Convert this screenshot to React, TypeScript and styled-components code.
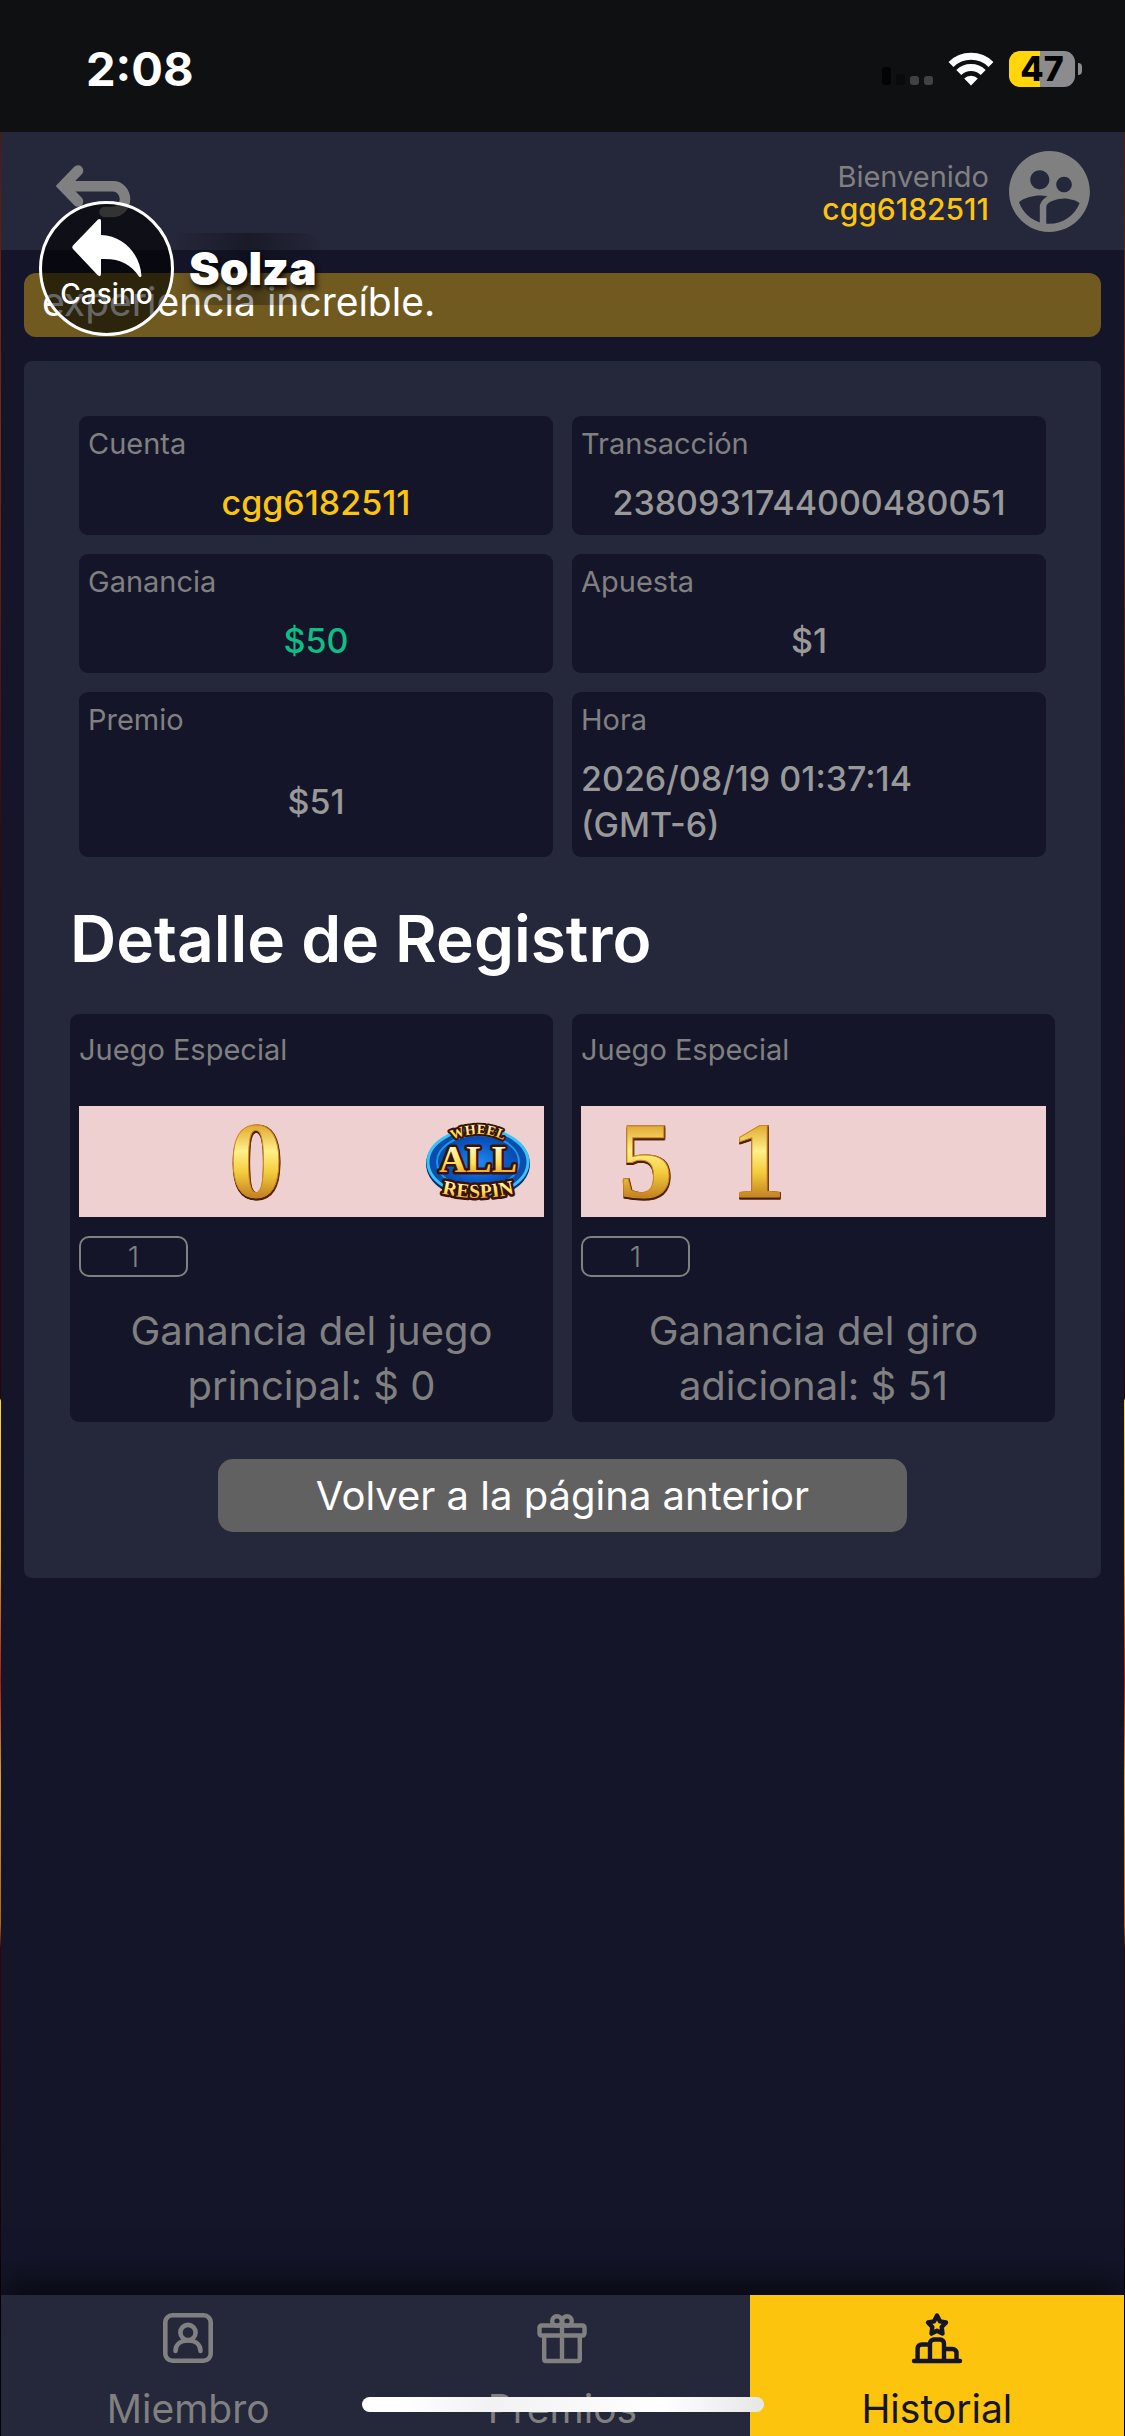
import React from "react";
import styled, { createGlobalStyle, css } from "styled-components";
import { MdSupervisedUserCircle } from "react-icons/md";

const color = {
  page: "#141529",
  panel: "#25273a",
  muted: "#808080",
  value: "#999999",
  accent: "#fdc40e",
  win: "#10bd86",
  ink: "#141529",
};

const GlobalStyle = createGlobalStyle`
  *, *::before, *::after { box-sizing: border-box; }
  body {
    margin: 0;
    font-family: Inter, "Liberation Sans", sans-serif;
    color: #fff;
    background: linear-gradient(
      180deg,
      #4a0f06 0%, #7a2a0c 18%, #3c0605 35%, #2a0404 57.4%,
      #ffd23c 57.5%, #f0a020 64%, #c05010 67%, #b01808 69%,
      #e0a030 73%, #c06010 79%, #330505 80%, #1c0202 92%, #000 96%
    );
  }
  h2, p, dl, dt, dd, figure { margin: 0; }
`;

const Screen = styled.div`
  position: relative;
  min-height: 100vh;
  display: flex;
  flex-direction: column;
`;

const StatusBar = styled.div`
  height: 132px;
  padding: 0 43px 0 86px;
  display: flex;
  align-items: center;
  justify-content: space-between;
  background: #0f1011;
`;

const Clock = styled.time`
  font-size: 47px;
  line-height: 56px;
  font-weight: 700;
  padding-top: 6px;
`;

const StatusIcons = styled.div`
  display: flex;
  align-items: center;
  gap: 15px;
  padding-top: 6px;
`;

const Battery = styled.div`
  display: flex;
  align-items: center;
  gap: 3px;
`;

const BatteryBody = styled.div`
  width: 66px;
  height: 36px;
  border-radius: 11px;
  background: linear-gradient(90deg, #ffd60a 47%, #8c8c8e 47%);
  color: #000;
  font-size: 34px;
  line-height: 36px;
  font-weight: 800;
  text-align: center;
`;

const BatteryCap = styled.div`
  width: 4px;
  height: 12px;
  border-radius: 0 6px 6px 0;
  background: #8c8c8e;
`;

const Page = styled.div`
  flex: 1;
  margin: 0 1px;
  display: flex;
  flex-direction: column;
  background: ${color.page};
`;

const Header = styled.header`
  height: 118px;
  padding: 0 26px 0 51px;
  display: flex;
  align-items: center;
  justify-content: space-between;
  background: ${color.panel};
`;

const IconLink = styled.a`
  display: block;
  color: ${color.muted};
  svg { display: block; }
`;

const Account = styled.div`
  display: flex;
  align-items: center;
  gap: 12px;
  color: ${color.muted};
`;

const Greeting = styled.p`
  padding-top: 4px;
  text-align: right;
  font-size: 29px;
  line-height: 32px;
  strong {
    display: block;
    font-size: 30px;
    font-weight: 500;
    color: ${color.accent};
  }
`;

const Main = styled.main`
  flex: 1;
  padding: 23px;
  display: flex;
  flex-direction: column;
  gap: 24px;
`;

const Marquee = styled.p`
  height: 64px;
  padding: 0 18px;
  border-radius: 12px;
  background: #705a20;
  font-size: 39px;
  line-height: 58px;
  white-space: nowrap;
  overflow: hidden;
`;

const Card = styled.section`
  padding: 55px 46px 46px;
  border-radius: 8px;
  background: ${color.panel};
`;

const InfoGrid = styled.dl`
  margin: 0 9px;
  display: grid;
  grid-template-columns: repeat(2, minmax(0, 1fr));
  gap: 19px;
`;

const InfoCell = styled.div`
  padding: 7px 9px 9px;
  display: flex;
  flex-direction: column;
  gap: 15px;
  border-radius: 9px;
  background: ${color.page};
`;

const labelText = css`
  font-size: 29px;
  line-height: 42px;
  color: ${color.muted};
`;

const InfoLabel = styled.dt`
  ${labelText}
`;

const InfoValue = styled.dd<{ $tone: string; $start?: boolean }>`
  flex: 1;
  display: flex;
  align-items: center;
  justify-content: ${(p) => (p.$start ? "flex-start" : "center")};
  font-size: 34px;
  line-height: 46px;
  font-weight: 500;
  white-space: pre-line;
  color: ${(p) => p.$tone};
`;

const Title = styled.h2`
  margin: 40px 0 33px;
  font-size: 64px;
  line-height: 84px;
  font-weight: 600;
`;

const RoundGrid = styled.div`
  display: grid;
  grid-template-columns: repeat(2, minmax(0, 1fr));
  gap: 19px;
`;

const Round = styled.article`
  padding: 15px 9px 9px;
  border-radius: 9px;
  background: ${color.page};
`;

const RoundLabel = styled.p`
  ${labelText}
`;

const Reels = styled.div`
  margin: 35px 0 19px;
  height: 111px;
  display: flex;
  justify-content: center;
  background: #eed0d1;
`;

const Reel = styled.div`
  width: 112px;
  svg { display: block; overflow: visible; }
`;

const Multiplier = styled.p`
  width: 109px;
  height: 41px;
  border: 2px solid ${color.muted};
  border-radius: 10px;
  text-align: center;
  font-size: 29px;
  line-height: 37px;
  font-weight: 300;
  color: ${color.muted};
`;

const Summary = styled.p`
  margin-top: 26px;
  padding: 0 36px;
  text-align: center;
  font-size: 40px;
  line-height: 55px;
  color: ${color.muted};
`;

const ReturnButton = styled.button`
  display: block;
  width: 70%;
  height: 73px;
  margin: 37px auto 0;
  padding: 0;
  border: 0;
  border-radius: 15px;
  background: #616161;
  color: #fff;
  font: 400 40px/73px Inter, "Liberation Sans", sans-serif;
`;

const TabBar = styled.nav`
  display: grid;
  grid-template-columns: repeat(3, 1fr);
  box-shadow: 0 -12px 36px rgba(0, 0, 0, 0.65);
`;

const Tab = styled.a<{ $active?: boolean }>`
  padding-top: 15px;
  display: flex;
  flex-direction: column;
  align-items: center;
  gap: 16px;
  font-size: 39px;
  line-height: 54px;
  text-decoration: none;
  color: ${(p) => (p.$active ? color.ink : color.muted)};
  background: ${(p) => (p.$active ? color.accent : color.panel)};
  svg { display: block; }
`;

const HomeIndicator = styled.div`
  position: absolute;
  left: 50%;
  bottom: 24px;
  width: 402px;
  height: 15px;
  margin-left: -201px;
  border-radius: 8px;
  background: linear-gradient(90deg, #fff 10%, #f2f2f2 32%, #fff 75%, #e6e6e6);
`;

const Floating = styled.div`
  position: absolute;
  left: 39px;
  top: 201px;
  display: flex;
  align-items: center;
`;

const FloatingButton = styled.button`
  width: 135px;
  height: 135px;
  padding: 0;
  display: flex;
  flex-direction: column;
  align-items: center;
  border: 3px solid #fff;
  border-radius: 50%;
  background: rgba(0, 0, 0, 0.6);
  color: #fff;
  font: 500 28px/32px Inter, "Liberation Sans", sans-serif;
  svg { display: block; margin-top: 14px; }
`;

const Brand = styled.span`
  height: 72px;
  padding: 0 8px 0 15px;
  border-radius: 0 24px 24px 0;
  background: linear-gradient(90deg, transparent, rgba(8, 8, 14, 0.4) 50%, transparent);
  font-size: 46px;
  line-height: 70px;
  font-weight: 900;
  text-shadow: 2px 4px 5px rgba(0, 0, 0, 0.8);
`;

function SignalIcon() {
  return (
    <svg width="51" height="34" viewBox="0 0 51 34" aria-hidden="true">
      <rect x="0" y="15" width="9" height="18" rx="3" fill="#040404" />
      <rect x="14" y="22" width="9" height="11" rx="3" fill="#0a0a0b" />
      <rect x="28" y="24" width="9" height="9" rx="3" fill="#414243" />
      <rect x="42" y="24" width="9" height="9" rx="3" fill="#414243" />
    </svg>
  );
}

function WifiIcon() {
  return (
    <svg width="46" height="34" viewBox="0 0 46 34" aria-hidden="true">
      <g fill="none" stroke="#fff" strokeWidth="7">
        <path d="M3 12.5A28.6 28.6 0 0 1 43 12.5" />
        <path d="M10.8 20.4A17.4 17.4 0 0 1 35.2 20.4" />
      </g>
      <path d="M23 33.5 16.2 26.6A9.5 9.5 0 0 1 29.8 26.6Z" fill="#fff" />
    </svg>
  );
}

function ReturnIcon() {
  return (
    <svg width="84" height="64" viewBox="0 0 84 64" aria-hidden="true">
      <g transform="translate(-52 -158)" fill="none" stroke="currentColor" strokeWidth="10.5" strokeLinecap="round">
        <path d="M78 169.500 63 185l15 15.500" />
        <path d="M64 185.300h49a12 12.800 0 0 1 0 25.600h-8.500" />
      </g>
    </svg>
  );
}

function ReplyIcon() {
  return (
    <svg width="70" height="60" viewBox="72 218 70 60" aria-hidden="true">
      <path
        d="M73 245.500 98 219.500Q101 218 101 221V235C124 236 140 254 141.500 276Q140.500 278 139 276.500C131 264 119 258 101 259V273Q101 278 97.500 275L73 249Q71.500 247.300 73 245.500Z"
        fill="#fff"
      />
    </svg>
  );
}

function MemberIcon() {
  return (
    <svg width="56" height="56" viewBox="0 0 56 56" fill="none" stroke="currentColor" strokeWidth="4.600" strokeLinecap="round" aria-hidden="true">
      <rect x="5.300" y="5.300" width="45.400" height="45.400" rx="7" />
      <circle cx="28" cy="22.500" r="7.600" />
      <path d="M15.500 41C15.500 35 20 30.500 28 30.500S40.500 35 40.500 41" />
    </svg>
  );
}

function GiftIcon() {
  return (
    <svg width="56" height="56" viewBox="0 0 56 56" fill="none" stroke="currentColor" strokeWidth="4.400" strokeLinejoin="round" aria-hidden="true">
      <rect x="5.500" y="15.500" width="45" height="10" rx="2" />
      <path d="M10.200 26v23.500a1.500 1.500 0 0 0 1.500 1.500h32.600a1.500 1.500 0 0 0 1.500-1.500V26" />
      <path d="M28 16v35" />
      <circle cx="23" cy="11" r="4.800" />
      <circle cx="33" cy="11" r="4.800" />
    </svg>
  );
}

function PodiumIcon() {
  return (
    <svg width="56" height="56" viewBox="0 0 56 56" fill="none" stroke="currentColor" strokeWidth="4.400" strokeLinecap="round" strokeLinejoin="round" aria-hidden="true">
      <path d="m28 5.500 3 5.900 6 1.100-4.300 4.600.8 6.500-5.500-2.800-5.500 2.800.8-6.500L19 12.500l6-1.100Z" />
      <path d="M5 51h46" />
      <path d="M8.600 50V38.500a4 4 0 0 1 4-4h8.200M21 50V33.500a4 4 0 0 1 4-4h6a4 4 0 0 1 4 4V50M35.500 39h8a4 4 0 0 1 4 4v7" />
    </svg>
  );
}

const GoldText = styled.text`
  font: 700 108px "Liberation Serif", serif;
  text-anchor: middle;
  stroke: #d08a24;
  stroke-width: 1px;
  filter: drop-shadow(0 2px 0 #4a1f08) drop-shadow(1px 0 0 #6a3008);
`;

function GoldDigit({ digit }: { digit: string }) {
  return (
    <svg width="112" height="111" viewBox="0 0 112 111">
      <defs>
        <linearGradient id={`gold${digit}`} x1="0" y1="0" x2="0" y2="1">
          <stop offset="0.200" stopColor="#e0a830" />
          <stop offset="0.420" stopColor="#fff08a" />
          <stop offset="0.600" stopColor="#f4cc3c" />
          <stop offset="0.850" stopColor="#b8741c" />
        </linearGradient>
      </defs>
      <GoldText x="56" y="91" fill={`url(#gold${digit})`}>{digit}</GoldText>
    </svg>
  );
}

function RespinBadge() {
  const lettering = {
    fill: "url(#badgeGold)",
    stroke: "#3a1206",
    paintOrder: "stroke",
    strokeLinejoin: "round" as const,
    textAnchor: "middle" as const,
    fontFamily: '"Liberation Serif", serif',
    fontWeight: 700,
  };
  return (
    <svg width="112" height="111" viewBox="-5 0 112 111">
      <defs>
        <linearGradient id="badgeGold" x1="0" y1="0" x2="0" y2="1">
          <stop offset="0.150" stopColor="#fffbd0" />
          <stop offset="0.600" stopColor="#ffdf55" />
          <stop offset="0.900" stopColor="#e8982c" />
        </linearGradient>
        <radialGradient id="badgeBlue">
          <stop offset="0" stopColor="#2088f0" />
          <stop offset="0.700" stopColor="#0a58c8" />
          <stop offset="1" stopColor="#0848a8" />
        </radialGradient>
        <path id="arcTop" d="M18 37Q49 19 80 37" />
        <path id="arcBottom" d="M4 85Q49 99 94 85" />
      </defs>
      <ellipse cx="49" cy="58" rx="52" ry="35" fill="#082c70" />
      <ellipse cx="49" cy="56" rx="50" ry="33" fill="#0a4cb0" stroke="#35c4f4" strokeWidth="3" />
      <ellipse cx="49" cy="56" rx="41" ry="27" fill="url(#badgeBlue)" stroke="#1898e8" strokeWidth="2" />
      <text {...lettering} fontSize="14" strokeWidth="4">
        <textPath href="#arcTop" startOffset="50%">WHEEL</textPath>
      </text>
      <text {...lettering} x="49" y="66" fontSize="38" strokeWidth="5">ALL</text>
      <text {...lettering} fontSize="20" strokeWidth="5">
        <textPath href="#arcBottom" startOffset="50%">RESPIN</textPath>
      </text>
    </svg>
  );
}

const info = [
  { label: "Cuenta", value: "cgg6182511", tone: color.accent },
  { label: "Transacción", value: "2380931744000480051", tone: color.value },
  { label: "Ganancia", value: "$50", tone: color.win },
  { label: "Apuesta", value: "$1", tone: color.value },
  { label: "Premio", value: "$51", tone: color.value },
  { label: "Hora", value: "2026/08/19 01:37:14\n(GMT-6)", tone: color.value, start: true },
];

const rounds = [
  { reels: ["", "0", "", "all"], summary: "Ganancia del juego principal: $ 0" },
  { reels: ["5", "1", "", ""], summary: "Ganancia del giro adicional: $ 51" },
];

function ReelSymbol({ symbol }: { symbol: string }) {
  if (symbol === "all") return <RespinBadge />;
  return symbol ? <GoldDigit digit={symbol} /> : null;
}

export default function App() {
  return (
    <Screen>
      <GlobalStyle />
      <StatusBar>
        <Clock>2:08</Clock>
        <StatusIcons>
          <SignalIcon />
          <WifiIcon />
          <Battery>
            <BatteryBody>47</BatteryBody>
            <BatteryCap />
          </Battery>
        </StatusIcons>
      </StatusBar>
      <Page>
        <Header>
          <IconLink href="#volver" aria-label="Volver"><ReturnIcon /></IconLink>
          <Account>
            <Greeting>Bienvenido<strong>cgg6182511</strong></Greeting>
            <MdSupervisedUserCircle size={97} />
          </Account>
        </Header>
        <Main>
          <Marquee>experiencia increíble.</Marquee>
          <Card>
            <InfoGrid>
              {info.map((item) => (
                <InfoCell key={item.label}>
                  <InfoLabel>{item.label}</InfoLabel>
                  <InfoValue $tone={item.tone} $start={item.start}>{item.value}</InfoValue>
                </InfoCell>
              ))}
            </InfoGrid>
            <Title>Detalle de Registro</Title>
            <RoundGrid>
              {rounds.map((round) => (
                <Round key={round.summary}>
                  <RoundLabel>Juego Especial</RoundLabel>
                  <Reels>
                    {round.reels.map((symbol, i) => (
                      <Reel key={i}><ReelSymbol symbol={symbol} /></Reel>
                    ))}
                  </Reels>
                  <Multiplier>1</Multiplier>
                  <Summary>{round.summary}</Summary>
                </Round>
              ))}
            </RoundGrid>
            <ReturnButton type="button">Volver a la página anterior</ReturnButton>
          </Card>
        </Main>
        <TabBar>
          <Tab href="#miembro"><MemberIcon />Miembro</Tab>
          <Tab href="#premios"><GiftIcon />Premios</Tab>
          <Tab href="#historial" $active aria-current="page"><PodiumIcon />Historial</Tab>
        </TabBar>
      </Page>
      <Floating>
        <FloatingButton type="button"><ReplyIcon />Casino</FloatingButton>
        <Brand>Solza</Brand>
      </Floating>
      <HomeIndicator />
    </Screen>
  );
}
